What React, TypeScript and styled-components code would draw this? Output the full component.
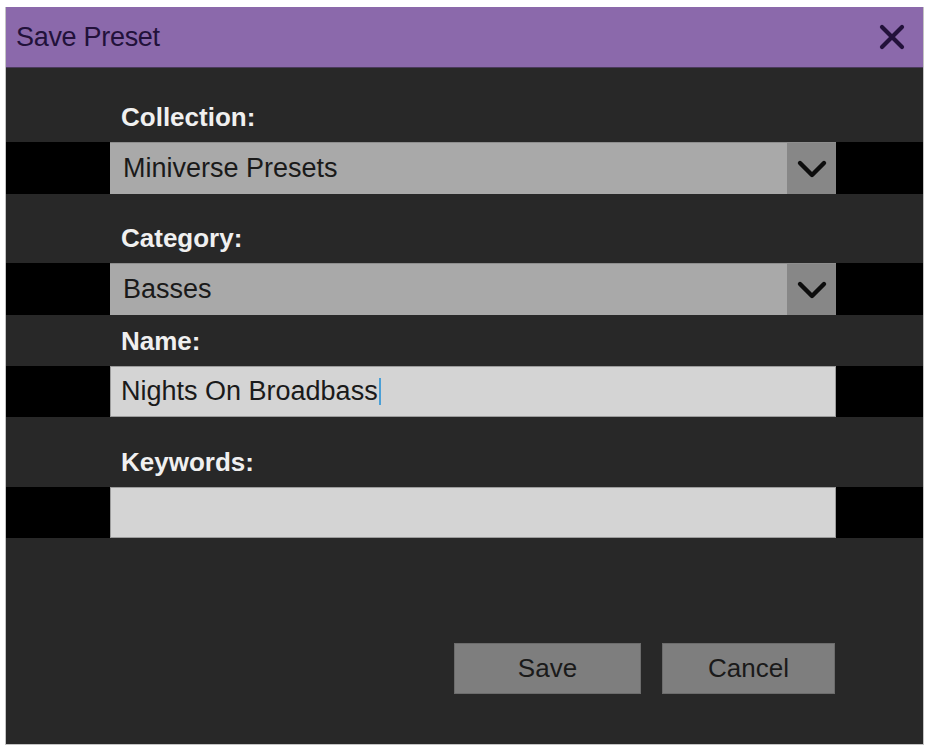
import { FC } from 'react';
import styled, { createGlobalStyle } from 'styled-components';

const GlobalStyle = createGlobalStyle`
	html,
	body {
		margin: 0;
		padding: 0;
		background: #ffffff;
		font-family: 'Liberation Sans', Arial, sans-serif;
	}
`;

const Dialog = styled.div`
	margin: 7px 0 0 5px;
	width: 919px;
	height: 738px;
	box-sizing: border-box;
	display: flex;
	flex-direction: column;
	background: #282828;
	border: 1px solid #c4c4c4;
	border-top: none;
`;

const TitleBar = styled.div`
	height: 61px;
	display: flex;
	align-items: center;
	justify-content: space-between;
	padding: 0 17px 0 10px;
	background: #8b69ab;
	border-bottom: 1px solid #4a3a5a;
	box-sizing: border-box;
`;

const Title = styled.span`
	font-size: 27px;
	color: #22113a;
	letter-spacing: -0.3px;
`;

const CloseButton = styled.button`
	width: 28px;
	height: 28px;
	padding: 0;
	border: none;
	background: transparent;
	display: flex;
	align-items: center;
	justify-content: center;
	cursor: pointer;
`;

const Body = styled.div`
	flex: 1;
	display: flex;
	flex-direction: column;
`;

const Group = styled.div<{ $top: number }>`
	margin-top: ${({ $top }) => $top}px;
	display: flex;
	flex-direction: column;
	gap: 10px;
`;

const Label = styled.label`
	padding-left: 115px;
	font-size: 26px;
	line-height: 30px;
	font-weight: 700;
	color: #f0f0f0;
`;

const Stripe = styled.div`
	display: flex;
	background: #000000;
	padding: 0 87px 0 104px;
`;

const Select = styled.div`
	flex: 1;
	height: 52px;
	display: flex;
	background: #a9a9a9;
	border-top: 1px solid #8e8e8e;
	box-sizing: border-box;
`;

const SelectValue = styled.span`
	flex: 1;
	display: flex;
	align-items: center;
	padding-left: 13px;
	font-size: 27px;
	color: #1a1a1a;
`;

const Arrow = styled.span`
	width: 49px;
	display: flex;
	align-items: center;
	justify-content: center;
	background: #878787;
`;

const TextBox = styled.div`
	flex: 1;
	height: 51px;
	display: flex;
	align-items: center;
	padding-left: 10px;
	background: #d4d4d4;
	border: 1px solid #9c9c9c;
	box-sizing: border-box;
	font-size: 27px;
	color: #1a1a1a;
`;

const Caret = styled.span`
	width: 2px;
	height: 27px;
	margin-left: 1px;
	background: #4a9fd6;
`;

const Actions = styled.div`
	margin-top: 105px;
	display: flex;
	justify-content: flex-end;
	gap: 21px;
	padding-right: 88px;
`;

const ActionButton = styled.button<{ $width: number }>`
	width: ${({ $width }) => $width}px;
	height: 51px;
	padding: 0;
	background: #7e7e7e;
	border: 1px solid #6c6c6c;
	font-family: 'Liberation Sans', Arial, sans-serif;
	font-size: 26px;
	color: #1a1a1a;
	cursor: pointer;
`;

const Chevron: FC = () => (
	<svg width="32" height="22" viewBox="0 0 32 22">
		<path d="M4 5 L16 17 L28 5" fill="none" stroke="#0d0d0d" strokeWidth="4.4" strokeLinecap="round" strokeLinejoin="round" />
	</svg>
);

const fields = [
	{ label: 'Collection:', value: 'Miniverse Presets', kind: 'select', top: 34 },
	{ label: 'Category:', value: 'Basses', kind: 'select', top: 29 },
	{ label: 'Name:', value: 'Nights On Broadbass', kind: 'text', top: 11, focused: true },
	{ label: 'Keywords:', value: '', kind: 'text', top: 30 },
];

export default function App() {
	return (
		<>
			<GlobalStyle />
			<Dialog>
				<TitleBar>
					<Title>Save Preset</Title>
					<CloseButton aria-label="Close">
						<svg width="26" height="26" viewBox="0 0 26 26">
							<path d="M3 3 L23 23 M23 3 L3 23" stroke="#22113a" strokeWidth="4.2" strokeLinecap="round" />
						</svg>
					</CloseButton>
				</TitleBar>
				<Body>
					{fields.map((f, idx) => (
						<Group $top={f.top} key={idx}>
							<Label>{f.label}</Label>
							<Stripe>
								{f.kind === 'select' ? (
									<Select>
										<SelectValue>{f.value}</SelectValue>
										<Arrow>
											<Chevron />
										</Arrow>
									</Select>
								) : (
									<TextBox>
										{f.value}
										{f.focused && <Caret />}
									</TextBox>
								)}
							</Stripe>
						</Group>
					))}
					<Actions>
						<ActionButton $width={187}>Save</ActionButton>
						<ActionButton $width={173}>Cancel</ActionButton>
					</Actions>
				</Body>
			</Dialog>
		</>
	);
}
